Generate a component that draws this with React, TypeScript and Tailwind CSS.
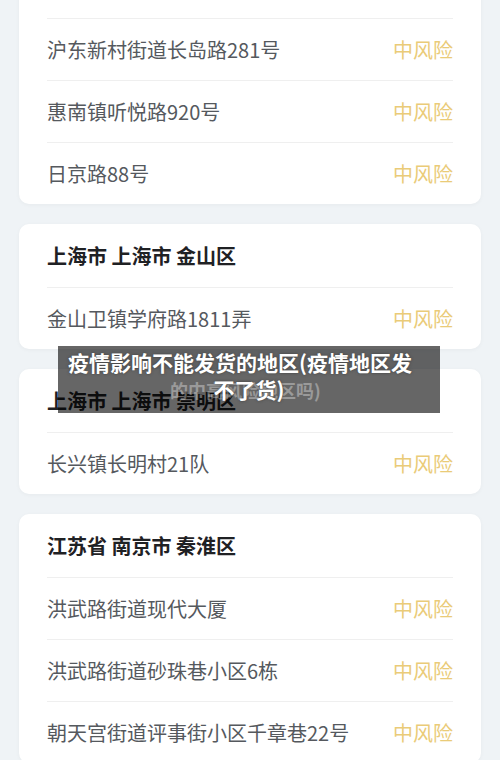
import React from "react";

type Area = {
  title: string;
  items: string[];
};

const AREAS: Area[] = [
  {
    title: "上海市 上海市 浦东新区",
    items: ["沪东新村街道长岛路281号", "惠南镇听悦路920号", "日京路88号"],
  },
  {
    title: "上海市 上海市 金山区",
    items: ["金山卫镇学府路1811弄"],
  },
  {
    title: "上海市 上海市 崇明区",
    items: ["长兴镇长明村21队"],
  },
  {
    title: "江苏省 南京市 秦淮区",
    items: ["洪武路街道现代大厦", "洪武路街道砂珠巷小区6栋", "朝天宫街道评事街小区千章巷22号"],
  },
];

function AreaCard({ area }: { area: Area }) {
  return (
    <div className="rounded-[10px] bg-white shadow-[0_1px_4px_rgba(0,0,0,0.04)]">
      <div className="flex h-[63px] items-center px-7 text-[20px] font-bold text-[#1f2124]">
        {area.title}
      </div>
      {area.items.map((item) => (
        <div key={item} className="mx-7 flex h-[62px] items-center justify-between border-t border-[#efefef]">
          <span className="text-[20px] text-[#55595e]">{item}</span>
          <span className="text-[20px] text-[#eacb78]">中风险</span>
        </div>
      ))}
    </div>
  );
}

export default function App() {
  return (
    <div
      className="relative h-[760px] w-[500px] overflow-hidden bg-[#eff3f6]"
      style={{ fontFamily: '"Noto Sans CJK SC", "Noto Sans", sans-serif' }}
    >
      <div className="-mt-[45px] flex flex-col gap-5 px-[19px]">
        {AREAS.map((a) => (
          <AreaCard key={a.title} area={a} />
        ))}
      </div>

      {/* title banner over the list */}
      <div className="absolute left-[58px] top-[346px] h-[67px] w-[382px] bg-black/60">
        <span className="absolute left-[112px] top-[31px] text-[18px] font-bold leading-[27px] text-white/35">
          的中高风险地区吗)
        </span>
        <div className="relative pl-[9px] pt-[3px] text-[21px] font-bold leading-[27px] text-white [text-shadow:0_0_3px_rgba(60,60,60,0.9)]">
          <div className="w-[346px] text-center">疫情影响不能发货的地区(疫情地区发</div>
          <div className="w-[364px] text-center">不了货)</div>
        </div>
      </div>
    </div>
  );
}
